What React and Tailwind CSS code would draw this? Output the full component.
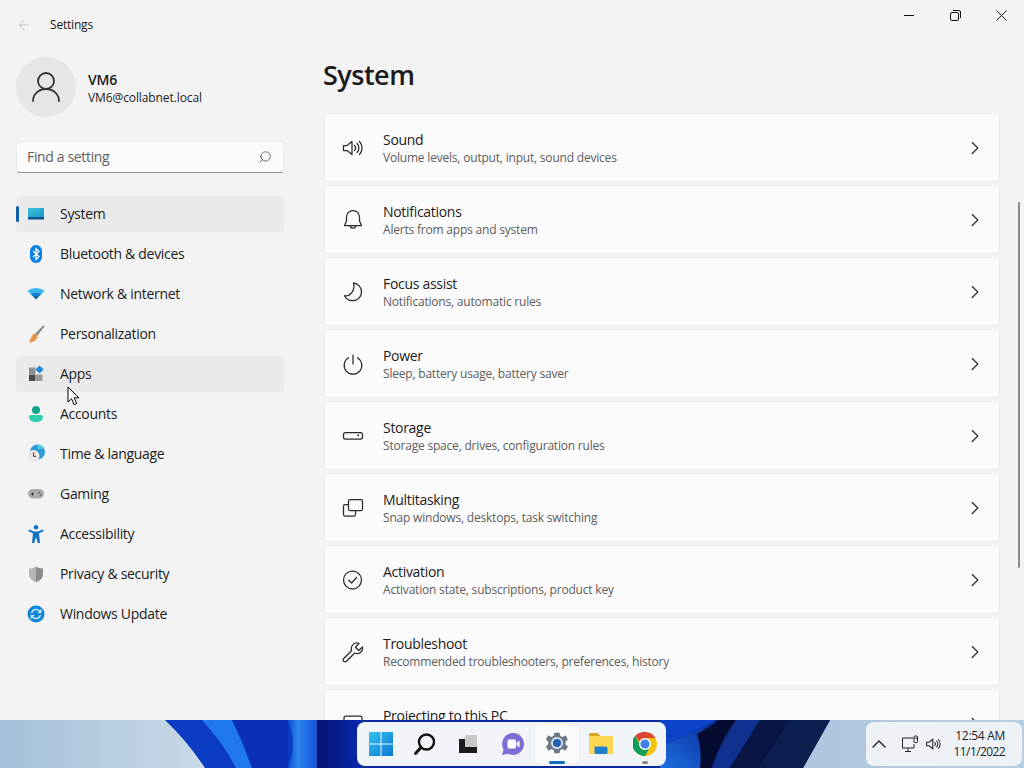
import { ChevronRight, ChevronUp, ArrowLeft, Search } from "lucide-react";

const navItems = [
  { label: "System", icon: SystemIcon, active: true },
  { label: "Bluetooth & devices", icon: BluetoothIcon },
  { label: "Network & internet", icon: NetworkIcon },
  { label: "Personalization", icon: BrushIcon },
  { label: "Apps", icon: AppsIcon, hover: true },
  { label: "Accounts", icon: AccountsIcon },
  { label: "Time & language", icon: TimeIcon },
  { label: "Gaming", icon: GamingIcon },
  { label: "Accessibility", icon: AccessIcon },
  { label: "Privacy & security", icon: ShieldIcon },
  { label: "Windows Update", icon: UpdateIcon },
];

const rows = [
  { title: "Sound", sub: "Volume levels, output, input, sound devices", icon: SoundIcon },
  { title: "Notifications", sub: "Alerts from apps and system", icon: BellIcon },
  { title: "Focus assist", sub: "Notifications, automatic rules", icon: MoonIcon },
  { title: "Power", sub: "Sleep, battery usage, battery saver", icon: PowerIcon },
  { title: "Storage", sub: "Storage space, drives, configuration rules", icon: StorageIcon },
  { title: "Multitasking", sub: "Snap windows, desktops, task switching", icon: MultitaskIcon },
  { title: "Activation", sub: "Activation state, subscriptions, product key", icon: CheckIcon },
  { title: "Troubleshoot", sub: "Recommended troubleshooters, preferences, history", icon: WrenchIcon },
  { title: "Projecting to this PC", sub: "\u00a0", icon: ProjectIcon },
];

function Line({ children, size = 22 }) {
  return (
    <svg width={size} height={size} viewBox="0 0 22 22" fill="none" stroke="#2b2b2b" strokeWidth="1.25" strokeLinecap="round" strokeLinejoin="round">
      {children}
    </svg>
  );
}

function SoundIcon() {
  return (
    <Line>
      <path d="M1.500 8.500v5h3.500l5 4V4.500l-5 4z" />
      <path d="M12.500 8.500a3.400 3.400 0 0 1 0 5M15 6.500a6.300 6.300 0 0 1 0 9M17.500 4.500a9.500 9.500 0 0 1 0 13" />
    </Line>
  );
}
function BellIcon() {
  return (
    <Line>
      <path d="M11 1.500a6.500 6.500 0 0 0-6.500 6.500v4L2.500 16.500h17L17.500 12V8A6.500 6.500 0 0 0 11 1.500z" />
      <path d="M8.300 16.500a2.700 2.700 0 0 0 5.400 0" />
    </Line>
  );
}
function MoonIcon() {
  return (
    <Line>
      <path d="M11.500 1.800a9.300 9.300 0 0 1 8 9.200 8.700 8.700 0 0 1-8.700 8.700 8.800 8.800 0 0 1-8.300-5c5.500.8 11-5 9-12.900z" />
    </Line>
  );
}
function PowerIcon() {
  return (
    <Line>
      <path d="M11 2v9" />
      <path d="M6.500 4.800a8.800 8.800 0 1 0 9 0" />
    </Line>
  );
}
function StorageIcon() {
  return (
    <Line>
      <rect x="1.500" y="7.500" width="19" height="6.500" rx="2" />
      <circle cx="16.300" cy="10.300" r=".4" fill="#2b2b2b" />
    </Line>
  );
}
function MultitaskIcon() {
  return (
    <Line>
      <rect x="6.500" y="2.500" width="14" height="11" rx="1.500" />
      <path d="M6.500 7.500H3A1.500 1.500 0 0 0 1.500 9v8.500A1.500 1.500 0 0 0 3 19h9a1.500 1.500 0 0 0 1.500-1.500V13.500" />
    </Line>
  );
}
function CheckIcon() {
  return (
    <Line>
      <circle cx="10.500" cy="11" r="9" />
      <path d="M6.800 11.200l2.800 2.800 5-5.500" />
    </Line>
  );
}
function WrenchIcon() {
  return (
    <Line>
      <path d="M20.500 6l-3.700 3.500-3.300-3.300 3.500-3.700a5.500 5.500 0 0 0-7.300 7L1.800 17.500a2 2 0 0 0 0 2.800 2 2 0 0 0 2.700 0l8.200-8.300A5.500 5.500 0 0 0 20.500 6z" />
    </Line>
  );
}
function ProjectIcon() {
  return (
    <Line>
      <rect x="2" y="3" width="18" height="13" rx="2" />
    </Line>
  );
}

function SystemIcon() {
  return (
    <svg width="20" height="20" viewBox="0 0 20 20">
      <defs>
        <linearGradient id="sysg" x1="0" y1="0" x2="1" y2="1">
          <stop offset="0" stopColor="#3cc6da" />
          <stop offset="1" stopColor="#1b93c9" />
        </linearGradient>
      </defs>
      <rect x="2" y="4" width="16" height="9" fill="url(#sysg)" />
      <rect x="2" y="13" width="16" height="2.500" fill="#11508f" />
    </svg>
  );
}
function BluetoothIcon() {
  return (
    <svg width="20" height="20" viewBox="0 0 20 20">
      <rect x="4" y="1" width="12" height="18" rx="6" fill="#0a7fe6" />
      <path d="M7 7l6 5.500-3 3v-11l3 3-6 5.500" fill="none" stroke="#fff" strokeWidth="1.200" />
    </svg>
  );
}
function NetworkIcon() {
  return (
    <svg width="20" height="20" viewBox="0 0 20 20">
      <path d="M1.500 6.500Q10 1.500 18.500 6.500L15.500 10Q10 6.500 4.500 10z" fill="#35b6ec" />
      <path d="M4.500 10Q10 6.500 15.500 10L13 12.500Q10 10.800 7 12.500z" fill="#0e7fd6" />
      <path d="M7 12.500Q10 10.800 13 12.500L10 15.500z" fill="#0b5cab" />
    </svg>
  );
}
function BrushIcon() {
  return (
    <svg width="20" height="20" viewBox="0 0 20 20">
      <path d="M17.500 1L9 10l2 2L18.500 2.500z" fill="#8a8a8a" />
      <path d="M9 9.500c-3 .5-3 3-4 4.500-.5 1.500-1.500 3-2 4.500 3 0 8-1.500 8.500-6.500z" fill="#e8964a" />
    </svg>
  );
}
function AppsIcon() {
  return (
    <svg width="20" height="20" viewBox="0 0 20 20">
      <rect x="3" y="3.500" width="6.500" height="6.500" fill="#8f8f8f" />
      <rect x="3" y="10.500" width="6.500" height="6.500" fill="#4a4a4a" />
      <rect x="10" y="10.500" width="6.500" height="6.500" fill="#9a9a9a" />
      <path d="M13.500 1.500l4 4-4 4-4-4z" fill="#1a87d8" />
    </svg>
  );
}
function AccountsIcon() {
  return (
    <svg width="20" height="20" viewBox="0 0 20 20">
      <circle cx="10" cy="6" r="4" fill="#17a38c" />
      <path d="M3 13a2 2 0 0 1 2-2h10a2 2 0 0 1 2 2c0 3-3 5-7 5s-7-2-7-5z" fill="#2fcfae" />
    </svg>
  );
}
function TimeIcon() {
  return (
    <svg width="20" height="20" viewBox="0 0 20 20">
      <circle cx="11.500" cy="8" r="7.500" fill="#2a9dd8" />
      <path d="M11.500.5a7.500 7.500 0 0 1 6.500 3.700l-6.500 1z" fill="#4cd0d8" />
      <circle cx="7.500" cy="12" r="6" fill="#efe6e8" />
      <path d="M7.500 8.500v3.800h2.700" fill="none" stroke="#333" strokeWidth="1" />
    </svg>
  );
}
function GamingIcon() {
  return (
    <svg width="20" height="20" viewBox="0 0 20 20">
      <rect x="2" y="5" width="16" height="9.500" rx="4.700" fill="#ababab" />
      <path d="M5 10h3M6.500 8.500v3" stroke="#333" strokeWidth="1" />
      <circle cx="13" cy="8.800" r=".8" fill="#444" />
      <circle cx="14.500" cy="11" r=".8" fill="#444" />
    </svg>
  );
}
function AccessIcon() {
  return (
    <svg width="20" height="20" viewBox="0 0 20 20">
      <circle cx="10" cy="3.200" r="2.200" fill="#0f73c4" />
      <path d="M3 5.500l5 2h4l5-2 .6 1.800-4.600 2 1 9.700h-2.200L10 13l-1.800 6H6l1-9.700-4.600-2z" fill="#0f73c4" />
    </svg>
  );
}
function ShieldIcon() {
  return (
    <svg width="20" height="20" viewBox="0 0 20 20">
      <path d="M10 2.500c2 1.500 4.500 2 7 2v6c0 3.500-3 6-7 7.500-4-1.500-7-4-7-7.500v-6c2.500 0 5-.5 7-2z" fill="#b5b5b5" />
      <path d="M10 2.500c2 1.500 4.500 2 7 2v6c0 3.500-3 6-7 7.500z" fill="#8d8d8d" />
    </svg>
  );
}
function UpdateIcon() {
  return (
    <svg width="20" height="20" viewBox="0 0 20 20">
      <circle cx="10" cy="10" r="8.500" fill="#0d86d8" />
      <path d="M5.500 9a4.700 4.700 0 0 1 8-2l1 1M14.500 11a4.700 4.700 0 0 1-8 2l-1-1" fill="none" stroke="#dff3ff" strokeWidth="1.300" />
      <path d="M14.800 5.300v3.200h-3.200M5.200 14.700v-3.200h3.200" fill="none" stroke="#dff3ff" strokeWidth="1.100" />
    </svg>
  );
}

function Wallpaper() {
  return (
    <svg className="absolute inset-0" width="1024" height="48" viewBox="0 0 1024 48">
      <defs>
        <linearGradient id="sky" x1="0" x2="1" y1="0" y2="0">
          <stop offset="0" stopColor="#a4c0da" />
          <stop offset="0.2" stopColor="#c9d9e7" />
          <stop offset="0.79" stopColor="#aec6de" />
          <stop offset="1" stopColor="#b9cee2" />
        </linearGradient>
        <linearGradient id="band" x1="0" x2="1" y1="0" y2="0">
          <stop offset="0" stopColor="#0f4fd0" />
          <stop offset="0.35" stopColor="#2e86f0" />
          <stop offset="1" stopColor="#1250d8" />
        </linearGradient>
        <linearGradient id="navy" x1="0" x2="1" y1="0" y2="0">
          <stop offset="0" stopColor="#041070" />
          <stop offset="1" stopColor="#0a2ab0" />
        </linearGradient>
        <linearGradient id="rightblue" x1="0" x2="1" y1="1" y2="0">
          <stop offset="0" stopColor="#1c6fe0" />
          <stop offset="1" stopColor="#0a2a9a" />
        </linearGradient>
      </defs>
      <rect width="1024" height="48" fill="url(#sky)" />
      {/* left swirl */}
      <path d="M165 0H320V48H205Q188 22 165 0z" fill="#0c3bc4" />
      <path d="M202 0H232Q244 24 252 48H236Q224 24 202 0z" fill="#1f78ee" />
      <path d="M232 0H288V48H252Q244 24 232 0z" fill="#0a2fb4" />
      <path d="M288 0H317V48H288Q298 25 288 0z" fill="url(#band)" />
      <path d="M317 0H362V48H317z" fill="url(#navy)" />
      {/* centre, mostly under the dock */}
      <rect x="362" width="300" height="48" fill="#0a2a9a" />
      {/* right swirl */}
      <path d="M660 0H830L803 48H660z" fill="#0a1c58" />
      <path d="M660 0H716Q700 10 666 24V48H660z" fill="#0b44c8" />
      <path d="M666 24Q700 10 716 0V0L700 48H660V24z" fill="url(#rightblue)" />
      <path d="M697 14Q702 30 700 48H712Q718 24 736 0H720z" fill="#050b30" />
      <path d="M736 0Q720 24 712 48H730Q745 24 760 0z" fill="#12308f" />
      <path d="M760 0Q745 24 730 48H758Q775 24 790 0z" fill="#081545" />
      <path d="M790 0H830L803 48H758Q775 24 790 0z" fill="#0c2050" />
    </svg>
  );
}

function Cursor() {
  return (
    <svg className="absolute left-[67px] top-[386px]" width="14" height="20" viewBox="0 0 14 20">
      <path d="M1 1v15l3.600-3.300 2.500 6 2.600-1.100-2.500-5.800H12z" fill="#fff" stroke="#000" strokeWidth="1" strokeLinejoin="round" />
    </svg>
  );
}

function WinLogo() {
  return (
    <svg width="24" height="24" viewBox="0 0 24 24">
      <defs>
        <linearGradient id="win" x1="0" y1="0" x2="1" y2="1">
          <stop offset="0" stopColor="#35c3f3" />
          <stop offset="1" stopColor="#0a78d0" />
        </linearGradient>
      </defs>
      <path d="M0 0h11.500v11.500H0zM12.500 0H24v11.500H12.500zM0 12.500h11.500V24H0zM12.500 12.500H24V24H12.500z" fill="url(#win)" />
    </svg>
  );
}
function TaskSearch() {
  return (
    <svg width="24" height="24" viewBox="0 0 24 24" fill="none" stroke="#111" strokeWidth="2.400" strokeLinecap="round">
      <circle cx="13.500" cy="10" r="7.500" />
      <path d="M8 15.500L2.500 21.500" strokeWidth="3" />
    </svg>
  );
}
function TaskView() {
  return (
    <svg width="20" height="18" viewBox="0 0 20 18">
      <rect x="0" y="4" width="18" height="14" fill="#1c1c1c" />
      <rect x="6" y="0" width="12" height="12" fill="#c9c9c9" />
    </svg>
  );
}
function TeamsChat() {
  return (
    <svg width="24" height="24" viewBox="0 0 24 24">
      <path d="M12 1a11 11 0 1 1-5 20.800L1 23l1.600-5.500A11 11 0 0 1 12 1z" fill="#7b6fd6" />
      <rect x="6.500" y="7.500" width="8.500" height="9" rx="1.500" fill="#fff" />
      <path d="M15.500 11l3-2.500v7l-3-2.500z" fill="#fff" />
    </svg>
  );
}
function TaskGear() {
  return (
    <svg width="24" height="24" viewBox="0 0 24 24">
      <path d="M9.500.8h5l.8 3.200 2.300 1 2.900-1.700 2.400 4.200-2.400 2.200v2.600l2.400 2.200-2.400 4.200-2.900-1.700-2.300 1-.8 3.200h-5l-.8-3.200-2.300-1-2.900 1.700L.9 14.500 3.300 12.300V9.700L.9 7.500l2.400-4.200 2.900 1.700 2.300-1z" fill="#6c7885" />
      <circle cx="12" cy="11" r="6" fill="#d8dde4" />
      <circle cx="12" cy="11" r="4" fill="#1d5fb4" />
    </svg>
  );
}
function TaskFolder() {
  return (
    <svg width="24" height="24" viewBox="0 0 24 24">
      <path d="M0 2.500A1.500 1.500 0 0 1 1.500 1h7l3 3H0z" fill="#d9a520" />
      <rect x="0" y="4" width="24" height="18" fill="#fbd850" />
      <rect x="5.500" y="14.500" width="13" height="7.500" rx="1.500" fill="#1f7fd0" />
    </svg>
  );
}
function TaskChrome() {
  return (
    <svg width="24" height="24" viewBox="0 0 24 24">
      <circle cx="12" cy="12" r="12" fill="#f4c20d" />
      <path d="M12 0a12 12 0 0 1 10.400 6H12a6 6 0 0 0-5.400 3.400L2 3.900A12 12 0 0 1 12 0z" fill="#db4437" />
      <path d="M2 3.900l4.600 7.900A5.500 5.500 0 0 0 10 17.600L6.400 22.600A12 12 0 0 1 2 3.900z" fill="#0f9d58" />
      <path d="M10 17.600l-3.800 5A12 12 0 0 0 12 24l5-9z" fill="#0f9d58" />
      <circle cx="12" cy="12" r="6" fill="#fff" />
      <circle cx="12" cy="12" r="4.600" fill="#3f83ea" />
    </svg>
  );
}

function TaskButton({ children, active, running }) {
  return (
    <div className={`relative flex h-10 w-11 shrink-0 items-center justify-center rounded ${active ? "bg-[#fbfbfb] shadow-[0_0_1px_rgba(0,0,0,0.2)]" : ""}`}>
      {children}
      {active && <span className="absolute bottom-0 h-[3px] w-4 rounded bg-[#0f6cbd]" />}
      {running && <span className="absolute bottom-0 h-[3px] w-[6px] rounded bg-[#8b8b8b]" />}
    </div>
  );
}

export default function App() {
  return (
    <div className="flex h-[768px] w-[1024px] flex-col overflow-hidden bg-[#f3f3f3] font-['Open_Sans','Noto_Sans',sans-serif] text-[#1b1b1b]">
      <div className="relative flex h-[720px] shrink-0 overflow-hidden">
        <aside className="flex w-[300px] shrink-0 flex-col">
          <div className="flex h-[50px] items-center pl-4">
            <ArrowLeft size={16} strokeWidth={1.2} className="text-[#b5b5b5]" />
            <span className="ml-[18px] text-xs tracking-[-0.2px]">Settings</span>
          </div>
          <div className="mt-[7px] flex items-center pl-4">
            <div className="flex h-[60px] w-[60px] items-center justify-center rounded-full bg-[#e6e6e6]">
              <svg width="30" height="32" viewBox="0 0 30 32" fill="none" stroke="#333" strokeWidth="1.800" strokeLinecap="round">
                <circle cx="15" cy="10" r="8" />
                <path d="M2 30c0-7 6-12 13-12s13 5 13 12" />
              </svg>
            </div>
            <div className="ml-3 flex flex-col">
              <span className="text-sm leading-[21px] font-semibold tracking-[-0.2px]">VM6</span>
              <span className="text-xs leading-4 tracking-[-0.1px]">VM6@collabnet.local</span>
            </div>
          </div>
          <div className="mx-4 mt-[24px] flex h-[32px] w-[268px] items-center justify-between rounded border border-[#ebebeb] border-b-[#8f8f8f] bg-[#fbfbfb] pr-[11px] pl-[10px]">
            <span className="text-sm tracking-[-0.35px] text-[#5f5f5f]">Find a setting</span>
            <Search size={14} strokeWidth={1.3} className="-scale-x-100 text-[#444]" />
          </div>
          <nav className="mt-[23px] flex flex-col gap-1 pl-4">
            {navItems.map((item) => (
              <div
                key={item.label}
                className={`relative flex h-9 w-[268px] items-center rounded pl-[10px] ${item.active || item.hover ? "bg-[#eaeaea]" : ""}`}
              >
                {item.active && <span className="absolute left-0 h-4 w-[3px] rounded bg-[#0f5fa8]" />}
                <item.icon />
                <span className="ml-[14px] text-sm tracking-[-0.3px]">{item.label}</span>
              </div>
            ))}
          </nav>
        </aside>

        <main className="flex min-w-0 flex-1 flex-col pl-6">
          <h1 className="mt-[56px] -ml-px h-[41px] text-[27px] leading-[38px] font-semibold tracking-[-0.5px]">System</h1>
          <div className="mt-[16px] flex w-[676px] flex-col gap-[3px] pt-[3px]">
            {rows.map((row) => (
              <div key={row.title} className="flex h-[69px] shrink-0 items-center rounded border border-[#ebebeb] bg-[#fbfbfb] pr-[13px] pl-[17px]">
                <row.icon />
                <div className="ml-[19px] flex flex-1 flex-col pt-[2px]">
                  <span className="text-sm leading-[18px] tracking-[-0.3px]">{row.title}</span>
                  <span className="text-xs leading-[18px] tracking-[-0.2px] text-[#5d5d5d]">{row.sub}</span>
                </div>
                <ChevronRight size={22} strokeWidth={1.4} className="text-[#333]" />
              </div>
            ))}
          </div>
          <div className="absolute top-[202px] right-[4px] h-[366px] w-[2px] rounded bg-[#8a8a8a]" />
          <div className="absolute top-0 right-0 flex h-[31px] items-center">
            <div className="flex w-[46px] justify-center">
              <svg width="10" height="10" viewBox="0 0 10 10" stroke="#111" strokeWidth="1">
                <path d="M0 4.500h10" />
              </svg>
            </div>
            <div className="flex w-[46px] justify-center">
              <svg width="11" height="11" viewBox="0 0 11 11" fill="none" stroke="#111" strokeWidth="1">
                <rect x=".5" y="2.500" width="8" height="8" rx="1.500" />
                <path d="M3 .5H9A1.500 1.500 0 0 1 10.500 2V8" />
              </svg>
            </div>
            <div className="flex w-[46px] justify-center pl-[1px]">
              <svg width="11" height="11" viewBox="0 0 11 11" stroke="#222" strokeWidth="1">
                <path d="M.5.5l10 10M10.500.5l-10 10" />
              </svg>
            </div>
          </div>
        </main>
        <Cursor />
      </div>

      <footer className="relative flex h-12 shrink-0 items-center justify-between pr-[2px] pl-[357px]">
        <Wallpaper />
        <div className="relative flex h-11 w-[309px] items-center overflow-hidden rounded-lg bg-[#f1f4f9] pl-[2px]">
          <TaskButton><WinLogo /></TaskButton>
          <TaskButton><TaskSearch /></TaskButton>
          <TaskButton><TaskView /></TaskButton>
          <TaskButton><TeamsChat /></TaskButton>
          <TaskButton active><TaskGear /></TaskButton>
          <TaskButton><TaskFolder /></TaskButton>
          <TaskButton running><TaskChrome /></TaskButton>
        </div>
        <div className="relative flex h-11 w-[156px] items-center rounded-lg bg-[#eef1f6] pl-[1px]">
          <ChevronUp size={24} strokeWidth={1.4} className="text-[#222]" />
          <svg className="ml-[10px]" width="18" height="18" viewBox="0 0 18 18" fill="none" stroke="#222" strokeWidth="1">
            <path d="M12 3H1.500v10H13V9M7 13v3M4 16.500h6" />
            <rect x="13" y="1" width="3.500" height="6.500" rx=".8" />
            <path d="M13.500 3.200h2.500" />
          </svg>
          <svg className="ml-[6px]" width="17" height="16" viewBox="0 0 22 22" fill="none" stroke="#222" strokeWidth="1.400">
            <path d="M1.500 8.500v5h3.500l5 4V4.500l-5 4z" />
            <path d="M12.500 8.500a3.400 3.400 0 0 1 0 5M15 6.500a6.300 6.300 0 0 1 0 9M17.500 4.500a9.500 9.500 0 0 1 0 13" />
          </svg>
          <div className="ml-[12px] flex w-[51px] flex-col items-end text-xs leading-[16px] text-[#222]">
            <span className="tracking-[-0.3px]">12:54 AM</span>
            <span className="tracking-[-0.6px]">11/1/2022</span>
          </div>
        </div>
      </footer>
    </div>
  );
}
